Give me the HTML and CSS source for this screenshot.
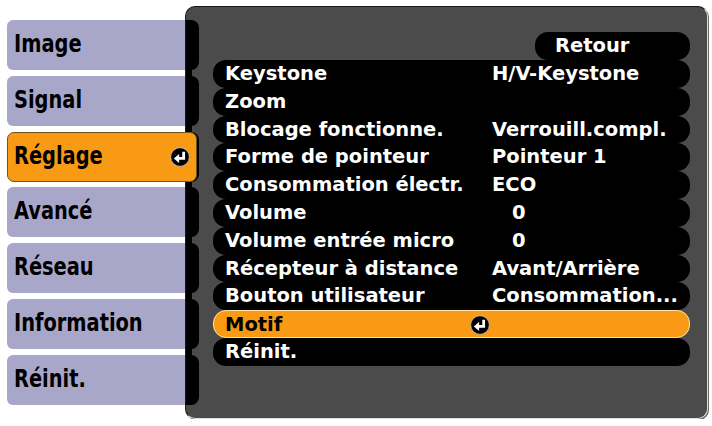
FILE: index.html
```html
<!DOCTYPE html>
<html lang="fr">
<head>
<meta charset="utf-8">
<title>Réglage</title>
<link rel="stylesheet" href="styles.css">
</head>
<body>
<div class="screen">
  <nav class="tabs">
    <div class="tab"><span class="tab-label">Image</span></div>
    <div class="tab"><span class="tab-label">Signal</span></div>
    <div class="tab tab-active"><span class="tab-label">Réglage</span>
      <svg class="enter" viewBox="0 0 18 18" width="20" height="20"><circle cx="9" cy="9" r="8.4" fill="#000" stroke="#c9c9c9" stroke-width="0.7"/><path d="M12.3 4.2V10.3H7.2" fill="none" stroke="#fff" stroke-width="2.5"/><polygon points="3.4,10.3 8.2,6.3 8.2,14.3" fill="#fff"/></svg>
    </div>
    <div class="tab"><span class="tab-label">Avancé</span></div>
    <div class="tab"><span class="tab-label">Réseau</span></div>
    <div class="tab"><span class="tab-label">Information</span></div>
    <div class="tab"><span class="tab-label">Réinit.</span></div>
  </nav>
  <section class="panel">
    <div class="rail">
      <div class="rail-inner">
        <div class="seg"></div><div class="seg"></div><div class="seg"></div><div class="seg"></div><div class="seg"></div><div class="seg"></div><div class="seg"></div>
      </div>
    </div>
    <div class="menu">
      <div class="row row-back">Retour</div>
      <div class="row"><span>Keystone</span><span></span><span>H/V-Keystone</span></div>
      <div class="row"><span>Zoom</span><span></span><span></span></div>
      <div class="row"><span>Blocage fonctionne.</span><span></span><span>Verrouill.compl.</span></div>
      <div class="row"><span>Forme de pointeur</span><span></span><span>Pointeur 1</span></div>
      <div class="row"><span>Consommation électr.</span><span></span><span>ECO</span></div>
      <div class="row"><span>Volume</span><span></span><span class="indent">0</span></div>
      <div class="row"><span>Volume entrée micro</span><span></span><span class="indent">0</span></div>
      <div class="row"><span>Récepteur à distance</span><span></span><span>Avant/Arrière</span></div>
      <div class="row"><span>Bouton utilisateur</span><span></span><span>Consommation...</span></div>
      <div class="row row-active"><span>Motif</span><span class="icon-cell"><svg class="enter" viewBox="0 0 18 18" width="20" height="20"><circle cx="9" cy="9" r="8.4" fill="#000" stroke="#c9c9c9" stroke-width="0.7"/><path d="M12.3 4.2V10.3H7.2" fill="none" stroke="#fff" stroke-width="2.5"/><polygon points="3.4,10.3 8.2,6.3 8.2,14.3" fill="#fff"/></svg></span><span></span></div>
      <div class="row"><span>Réinit.</span><span></span><span></span></div>
    </div>
  </section>
</div>
</body>
</html>
```
FILE: styles.css
```css
html, body {
  margin: 0;
  padding: 0;
  background: #ffffff;
}

.screen {
  display: flex;
  align-items: flex-start;
  padding: 6px 0 0 7px;
  font-family: "DejaVu Sans", Verdana, sans-serif;
  font-weight: bold;
}

.tabs {
  position: relative;
  z-index: 2;
  width: 178px;
  padding-top: 14px;
  display: flex;
  flex-direction: column;
  gap: 5.83px;
}

.tab {
  height: 50px;
  box-sizing: border-box;
  background: #a9a7c9;
  border-radius: 6px 0 0 6px;
  display: flex;
  align-items: center;
  justify-content: space-between;
  padding: 0 8px 0 7px;
  color: #000;
}

.tab-label {
  display: inline-block;
  font-size: 19.4px;
  line-height: 20px;
  transform: scaleY(1.25);
  transform-origin: 50% 60%;
}

.tab-active {
  margin-right: -12px;
  background: #f99a14;
  border: 1px solid #6e5418;
  border-radius: 7px;
  padding: 0 6px 0 6px;
}

.enter {
  display: block;
}

.panel {
  position: relative;
  z-index: 1;
  width: 523px;
  height: 413px;
  box-sizing: border-box;
  background: #4b4b4b;
  border: 1px solid;
  border-color: #1a1a1a #dedede #dedede #1a1a1a;
  border-radius: 10px;
  box-shadow: 1px 1px 0 #6a6a6a;
  display: flex;
  align-items: flex-start;
}

.rail {
  width: 13px;
  padding-top: 13px;
}

.rail-inner {
  display: flex;
  flex-direction: column;
  gap: 5.83px;
  background: linear-gradient(to right, #000 0, #000 6px, transparent 6px);
}

.seg {
  height: 50px;
  background: #000;
  border-radius: 0 8px 8px 0;
}

.menu {
  margin-left: 14px;
  padding-top: 25.2px;
  width: 477px;
  display: flex;
  flex-direction: column;
}

.row {
  height: 27.8px;
  box-sizing: border-box;
  display: grid;
  grid-template-columns: 245px 22px 1fr;
  align-items: center;
  padding-left: 12px;
  background: #000;
  border-radius: 13px;
  color: #fff;
  font-size: 19.5px;
  line-height: 27.8px;
  white-space: nowrap;
}

.row-back {
  display: block;
  margin-left: 322px;
  padding-left: 20px;
}

.indent {
  padding-left: 20px;
}

.row-active {
  background: #f99a14;
  color: #000;
  border: 1px solid #ffe2a8;
  padding-left: 11px;
}

.icon-cell {
  display: flex;
  align-items: center;
}
```
